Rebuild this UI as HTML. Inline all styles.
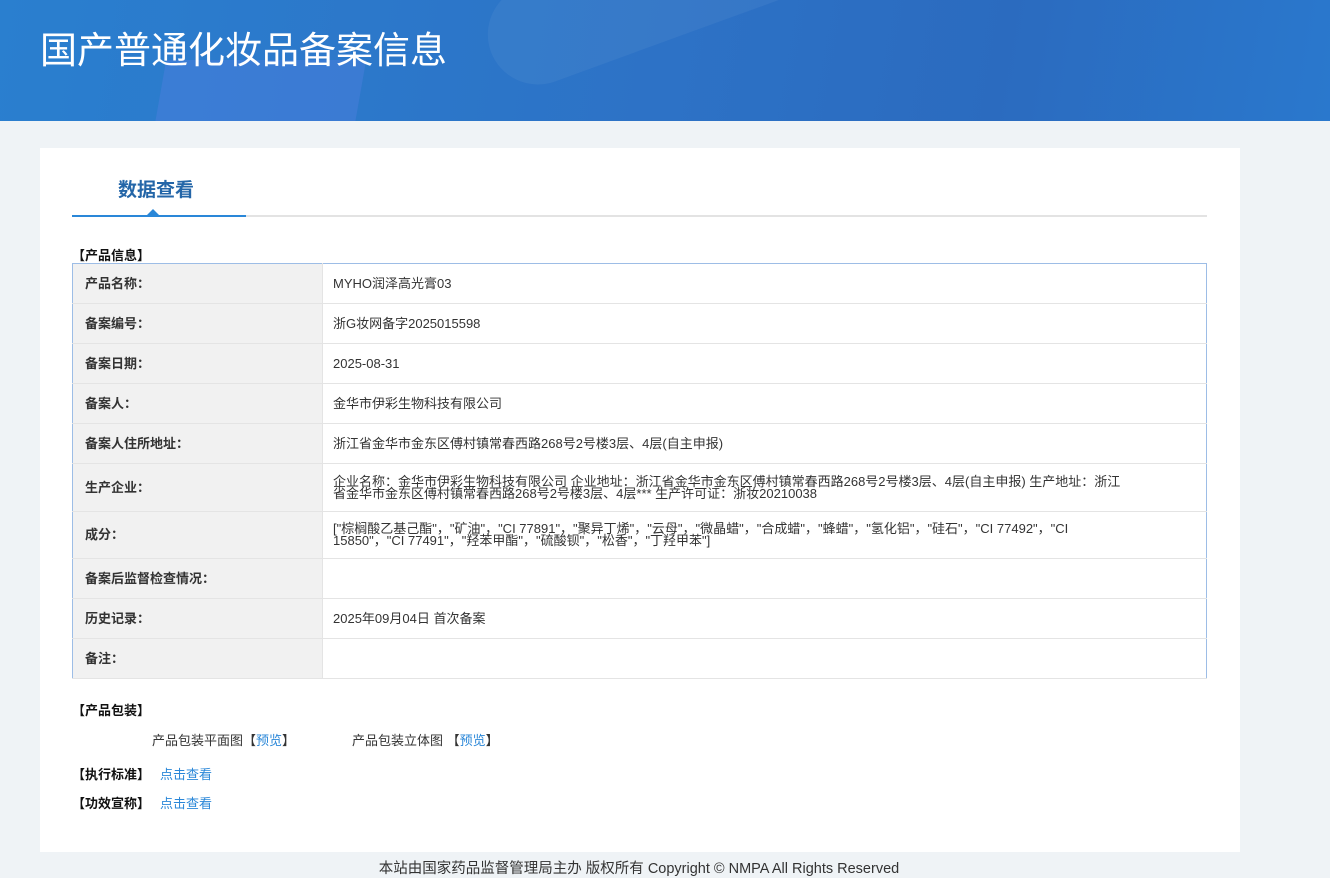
<!DOCTYPE html>
<html><head><meta charset="utf-8"><style>
*{margin:0;padding:0;box-sizing:border-box}
body{width:1330px;height:876px;overflow:hidden;background:#eff3f6;font-family:"Liberation Sans","Noto Sans CJK SC",sans-serif;color:#333;font-size:13px;position:relative}
.hd{position:absolute;left:0;top:0;width:1330px;height:121px;background:linear-gradient(100deg,#2a7fcf 0%,#2d72c6 50%,#2b6bbf 75%,#2a78cd 100%);overflow:hidden}
.hd .s1{position:absolute;left:160px;top:60px;width:200px;height:70px;background:rgba(90,130,230,.35);transform:skewX(-10deg)}
.hd .s2{position:absolute;left:480px;top:-60px;width:360px;height:100px;border-radius:50px;background:rgba(255,255,255,.05);transform:rotate(-20deg)}
.hd h1{position:absolute;left:40px;top:20px;font-size:37px;font-weight:normal;color:#fff;letter-spacing:0}
.card{position:absolute;left:40px;top:148px;width:1200px;height:704px;background:#fff}
.tab{position:absolute;left:78px;top:27px;font-size:19px;font-weight:bold;color:#2466a8}
.line{position:absolute;left:32px;top:67px;width:1135px;height:2px;background:#e3e3e3}
.line b{position:absolute;left:0;top:0;width:174px;height:2px;background:#2a87d8}
.tri{position:absolute;left:107px;top:61px;width:0;height:0;border-left:6px solid transparent;border-right:6px solid transparent;border-bottom:6px solid #2a87d8}
.sec{position:absolute;font-weight:bold;color:#111;font-size:13px}
table{position:absolute;left:32px;top:115px;width:1135px;border-collapse:collapse;border:1px solid #9dbde6}
td{border-bottom:1px solid #e4e4e4;height:40px;vertical-align:middle;line-height:12px}
td.l{width:250px;background:#f1f1f1;font-weight:bold;padding-left:12px;color:#333;border-right:1px solid #e4e4e4}
td.v{padding-left:10px;padding-right:64px}
a{color:#2a87d8;text-decoration:none}
.ft{position:absolute;top:857px;left:0;width:1278px;text-align:center;font-size:14.5px;color:#333}
</style></head><body>
<div class="hd"><div class="s1"></div><div class="s2"></div><h1>国产普通化妆品备案信息</h1></div>
<div class="card">
<div class="tab">数据查看</div>
<div class="line"><b></b></div><div class="tri"></div>
<div class="sec" style="left:32px;top:97px">【产品信息】</div>
<table>
<tr><td class="l">产品名称：</td><td class="v">MYHO润泽高光膏03</td></tr>
<tr><td class="l">备案编号：</td><td class="v">浙G妆网备字2025015598</td></tr>
<tr><td class="l">备案日期：</td><td class="v">2025-08-31</td></tr>
<tr><td class="l">备案人：</td><td class="v">金华市伊彩生物科技有限公司</td></tr>
<tr><td class="l">备案人住所地址：</td><td class="v">浙江省金华市金东区傅村镇常春西路268号2号楼3层、4层(自主申报)</td></tr>
<tr><td class="l" style="height:48px">生产企业：</td><td class="v">企业名称：金华市伊彩生物科技有限公司 企业地址：浙江省金华市金东区傅村镇常春西路268号2号楼3层、4层(自主申报) 生产地址：浙江<br>省金华市金东区傅村镇常春西路268号2号楼3层、4层*** 生产许可证：浙妆20210038</td></tr>
<tr><td class="l" style="height:47px">成分：</td><td class="v">["棕榈酸乙基己酯"，"矿油"，"CI 77891"，"聚异丁烯"，"云母"，"微晶蜡"，"合成蜡"，"蜂蜡"，"氢化铝"，"硅石"，"CI 77492"，"CI<br>15850"，"CI 77491"，"羟苯甲酯"，"硫酸钡"，"松香"，"丁羟甲苯"]</td></tr>
<tr><td class="l">备案后监督检查情况：</td><td class="v"></td></tr>
<tr><td class="l">历史记录：</td><td class="v">2025年09月04日 首次备案</td></tr>
<tr><td class="l">备注：</td><td class="v"></td></tr>
</table>
<div class="sec" style="left:32px;top:552px">【产品包装】</div>
<div style="position:absolute;left:112px;top:582px">产品包装平面图【<a>预览</a>】</div>
<div style="position:absolute;left:312px;top:582px">产品包装立体图 【<a>预览</a>】</div>
<div style="position:absolute;left:32px;top:616px"><b style="color:#111">【执行标准】</b><a style="margin-left:10px">点击查看</a></div>
<div style="position:absolute;left:32px;top:645px"><b style="color:#111">【功效宣称】</b><a style="margin-left:10px">点击查看</a></div>
</div>
<div class="ft">本站由国家药品监督管理局主办 版权所有 Copyright © NMPA All Rights Reserved</div>
</body></html>
